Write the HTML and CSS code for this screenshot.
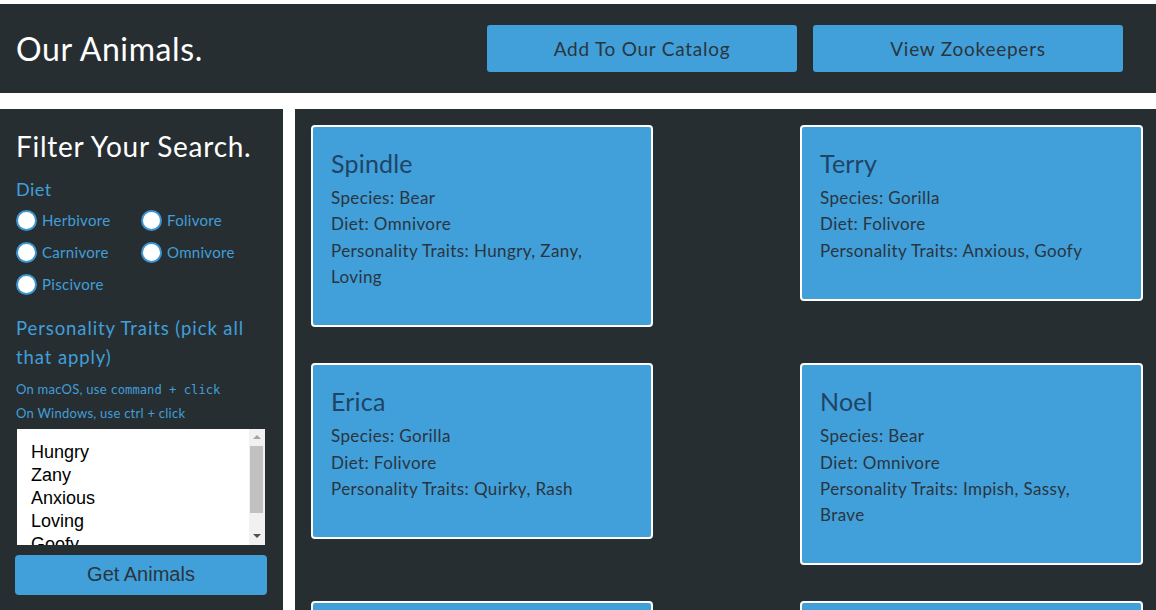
FILE: index.html
```html
<!DOCTYPE html>
<html lang="en">
<head>
<meta charset="utf-8">
<title>Our Animals</title>
<link rel="stylesheet" href="styles.css">
</head>
<body>
<header class="topbar">
  <h1 class="brand">Our Animals.</h1>
  <nav class="actions">
    <button class="action-btn">Add To Our Catalog</button>
    <button class="action-btn">View Zookeepers</button>
  </nav>
</header>
<div class="layout">
  <aside class="sidebar">
    <h2 class="filter-title">Filter Your Search.</h2>
    <form class="filter-form">
      <div class="field-label diet-label">Diet</div>
      <div class="radio-grid">
        <label class="radio"><input type="radio" name="diet"><span>Herbivore</span></label>
        <label class="radio"><input type="radio" name="diet"><span>Folivore</span></label>
        <label class="radio"><input type="radio" name="diet"><span>Carnivore</span></label>
        <label class="radio"><input type="radio" name="diet"><span>Omnivore</span></label>
        <label class="radio"><input type="radio" name="diet"><span>Piscivore</span></label>
      </div>
      <div class="field-label traits-label">Personality Traits (pick all that apply)</div>
      <p class="hint hint-first">On macOS, use <code>command + click</code></p>
      <p class="hint">On Windows, use ctrl + click</p>
      <div class="traits-box">
        <select class="traits" multiple size="5">
          <option>Hungry</option>
          <option>Zany</option>
          <option>Anxious</option>
          <option>Loving</option>
          <option>Goofy</option>
          <option>Impish</option>
        </select>
        <div class="scrollbar" aria-hidden="true">
          <div class="sb-btn"><span class="arrow-up"></span></div>
          <div class="sb-thumb"></div>
          <div class="sb-track"></div>
          <div class="sb-btn"><span class="arrow-down"></span></div>
        </div>
      </div>
      <button type="button" class="submit-btn">Get Animals</button>
    </form>
  </aside>
  <main class="cards">
    <article class="card">
      <h3 class="card-name">Spindle</h3>
      <p>Species: Bear</p>
      <p>Diet: Omnivore</p>
      <p>Personality Traits: Hungry, Zany, Loving</p>
    </article>
    <article class="card">
      <h3 class="card-name">Terry</h3>
      <p>Species: Gorilla</p>
      <p>Diet: Folivore</p>
      <p>Personality Traits: Anxious, Goofy</p>
    </article>
    <article class="card">
      <h3 class="card-name">Erica</h3>
      <p>Species: Gorilla</p>
      <p>Diet: Folivore</p>
      <p>Personality Traits: Quirky, Rash</p>
    </article>
    <article class="card">
      <h3 class="card-name">Noel</h3>
      <p>Species: Bear</p>
      <p>Diet: Omnivore</p>
      <p>Personality Traits: Impish, Sassy, Brave</p>
    </article>
    <article class="card card-offscreen">
      <h3 class="card-name">Bubbles</h3>
      <p>Species: Fish</p>
      <p>Diet: Herbivore</p>
      <p>Personality Traits: Zany</p>
    </article>
    <article class="card card-offscreen">
      <h3 class="card-name">Maude</h3>
      <p>Species: Penguin</p>
      <p>Diet: Piscivore</p>
      <p>Personality Traits: Loving, Goofy</p>
    </article>
  </main>
</div>
</body>
</html>
```

FILE: styles.css
```css
* { box-sizing: border-box; }

body {
  margin: 0;
  background: #ffffff;
  font-family: "Lato", "Liberation Sans", sans-serif;
  color: #28343e;
}

.topbar {
  margin-top: 4px;
  height: 89px;
  background: #272e32;
  display: flex;
  align-items: center;
  justify-content: space-between;
  padding: 0 33px 0 16px;
}

.brand {
  margin: 0;
  font-size: 32px;
  font-weight: 400;
  letter-spacing: 0.6px;
  color: #ffffff;
}

.actions {
  display: flex;
  gap: 16px;
}

.action-btn {
  width: 310px;
  height: 47px;
  border: none;
  border-radius: 3px;
  background: #419fd9;
  color: #2a363e;
  font-family: "Lato", "Liberation Sans", sans-serif;
  font-size: 19px;
  letter-spacing: 0.75px;
}

.layout {
  display: flex;
  gap: 12px;
  margin-top: 16px;
  align-items: stretch;
}

.sidebar {
  width: 283px;
  flex: none;
  background: #272e32;
  padding: 21px 16px 16px;
  min-height: 520px;
}

.filter-title {
  margin: 0;
  font-size: 28px;
  font-weight: 400;
  line-height: 1.2;
  letter-spacing: 0.75px;
  color: #ffffff;
}

.field-label {
  font-size: 18px;
  line-height: 29px;
  color: #419fd9;
}

.diet-label {
  margin-top: 11px;
  letter-spacing: 0.5px;
}

.radio-grid {
  display: grid;
  grid-template-columns: 125px 125px;
  row-gap: 11px;
  margin-top: 6px;
}

.radio {
  display: flex;
  align-items: center;
  gap: 5px;
  font-size: 15px;
  color: #419fd9;
  letter-spacing: 0.3px;
}

.radio input {
  appearance: none;
  -webkit-appearance: none;
  margin: 0;
  width: 21px;
  height: 21px;
  border-radius: 50%;
  background: #ffffff;
  border: 2px solid #3d95cf;
}

.traits-label {
  margin-top: 19px;
  font-size: 18.5px;
  letter-spacing: 0.9px;
}

.hint {
  margin: 0;
  font-size: 13px;
  line-height: 23.5px;
  letter-spacing: 0.25px;
  color: #419fd9;
}

.hint-first {
  margin-top: 6px;
}

.hint code {
  font-family: "DejaVu Sans Mono", "Liberation Mono", monospace;
  font-size: 12.2px;
  letter-spacing: 0;
}

.traits-box {
  position: relative;
  width: 248px;
  height: 116px;
  margin: 3px 0 0 1px;
  background: #ffffff;
}

.traits {
  display: block;
  width: 100%;
  height: 100%;
  border: none;
  padding: 13px 16px 0 14px;
  background: #ffffff;
  font-family: "Liberation Sans", Arial, sans-serif;
  font-size: 18px;
  color: #000000;
  outline: none;
  overflow: hidden;
  scrollbar-width: none;
}

.traits option {
  padding: 0;
  line-height: 23px;
  height: 23px;
}

.scrollbar {
  position: absolute;
  top: 0;
  right: 0;
  width: 16px;
  height: 100%;
  background: #f1f1f1;
  display: flex;
  flex-direction: column;
}

.sb-btn {
  height: 17px;
  flex: none;
  display: flex;
  align-items: center;
  justify-content: center;
}

.arrow-up {
  width: 0;
  height: 0;
  border-left: 4px solid transparent;
  border-right: 4px solid transparent;
  border-bottom: 4px solid #a3a3a3;
}

.arrow-down {
  width: 0;
  height: 0;
  border-left: 4px solid transparent;
  border-right: 4px solid transparent;
  border-top: 4px solid #505050;
}

.sb-thumb {
  height: 67px;
  flex: none;
  margin: 0 2px 0 1px;
  background: #c1c1c1;
}

.sb-track {
  flex: 1;
}

.submit-btn {
  display: block;
  width: 252px;
  height: 40px;
  margin: 10px 0 0 -1px;
  border: none;
  border-radius: 4px;
  background: #419fd9;
  color: #2a363e;
  font-family: "Liberation Sans", Arial, sans-serif;
  font-size: 20px;
}

.cards {
  flex: 1;
  background: #272e32;
  padding: 16px 13px 0 16px;
  display: grid;
  grid-template-columns: 342px 343px;
  justify-content: space-between;
  row-gap: 36px;
  align-items: start;
}

.card {
  background: #419fd9;
  border: 2px solid #ffffff;
  border-radius: 4px;
  padding: 21px 40px 34.5px 18px;
}

.card-name {
  margin: 0 0 7px;
  font-size: 25px;
  font-weight: 400;
  line-height: 1.2;
  letter-spacing: 0.2px;
  color: #1f4466;
}

.card p {
  margin: 0;
  font-size: 17px;
  line-height: 26.4px;
  color: #2a3540;
  letter-spacing: 0.4px;
}

.card-offscreen .card-name {
  margin-top: 12px;
}
```
